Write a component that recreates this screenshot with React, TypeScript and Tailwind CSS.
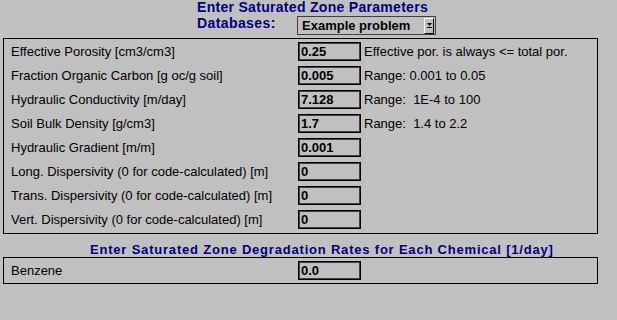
import React from 'react';

interface ParamRow {
  label: string;
  value: string;
  hint?: string;
}

const params: ParamRow[] = [
  { label: 'Effective Porosity [cm3/cm3]', value: '0.25', hint: 'Effective por. is always <= total por.' },
  { label: 'Fraction Organic Carbon [g oc/g soil]', value: '0.005', hint: 'Range: 0.001 to 0.05' },
  { label: 'Hydraulic Conductivity [m/day]', value: '7.128', hint: 'Range:  1E-4 to 100' },
  { label: 'Soil Bulk Density [g/cm3]', value: '1.7', hint: 'Range:  1.4 to 2.2' },
  { label: 'Hydraulic Gradient [m/m]', value: '0.001' },
  { label: 'Long. Dispersivity (0 for code-calculated) [m]', value: '0' },
  { label: 'Trans. Dispersivity (0 for code-calculated) [m]', value: '0' },
  { label: 'Vert. Dispersivity (0 for code-calculated) [m]', value: '0' },
];

function ValueBox({ value }: { value: string }) {
  return (
    <div className="w-[63px] h-[19px] shrink-0 border border-black shadow-[inset_0_0_0_1px_#404040] flex items-center pl-[2px] font-bold leading-none text-black">
      {value}
    </div>
  );
}

function Row({ row }: { row: ParamRow }) {
  return (
    <div className="flex items-center h-[19px]">
      <div className="w-[294px] shrink-0 pl-[7px] whitespace-nowrap">{row.label}</div>
      <ValueBox value={row.value} />
      {row.hint && <div className="ml-[3px] whitespace-pre">{row.hint}</div>}
    </div>
  );
}

export default function App() {
  return (
    <div
      className="w-[617px] h-[320px] bg-[#c0c0c0] text-[13px] text-black overflow-hidden"
      style={{ fontFamily: '"Liberation Sans", Arial, sans-serif' }}
    >
      {/* header */}
      <div className="pl-[197px] pt-[1px] h-[14px] leading-[13px] text-[14px] font-bold text-[#000080] tracking-[0.3px] whitespace-nowrap">
        Enter Saturated Zone Parameters
      </div>
      <div className="flex items-start pl-[197px] mt-[2px]">
        <div className="w-[100px] leading-[13px] font-bold text-[#000080] text-[14px] tracking-[0.4px] pt-[1px]">
          Databases:
        </div>
        <div className="w-[139px] h-[19px] border border-[#404040] flex items-center justify-between pl-[4px] pr-[1px]">
          <span className="font-bold leading-none">Example problem</span>
          <div className="w-[10px] h-[16px] bg-[#c0c0c0] border-t border-l border-white border-r border-b border-r-black border-b-black flex flex-col items-center justify-center gap-[1px]">
            <svg width="5" height="3" viewBox="0 0 5 3">
              <path d="M0 0h5L2.5 3z" fill="#000" />
            </svg>
            <div className="w-[5px] h-[1px] bg-black" />
          </div>
        </div>
      </div>

      {/* parameters */}
      <div className="ml-[3px] mt-[3px] w-[595px] border border-black pt-[3px] pb-[4px] flex flex-col gap-[5px]">
        {params.map((p) => (
          <Row key={p.label} row={p} />
        ))}
      </div>

      {/* degradation rates */}
      <div className="pl-[90px] mt-[9px] h-[13px] leading-[13px] font-bold text-[#000080] tracking-[0.8px] whitespace-nowrap">
        Enter Saturated Zone Degradation Rates for Each Chemical [1/day]
      </div>
      <div className="ml-[3px] mt-[1px] w-[595px] h-[27px] border border-black flex items-center">
        <div className="w-[294px] shrink-0 pl-[7px]">Benzene</div>
        <ValueBox value="0.0" />
      </div>
    </div>
  );
}
